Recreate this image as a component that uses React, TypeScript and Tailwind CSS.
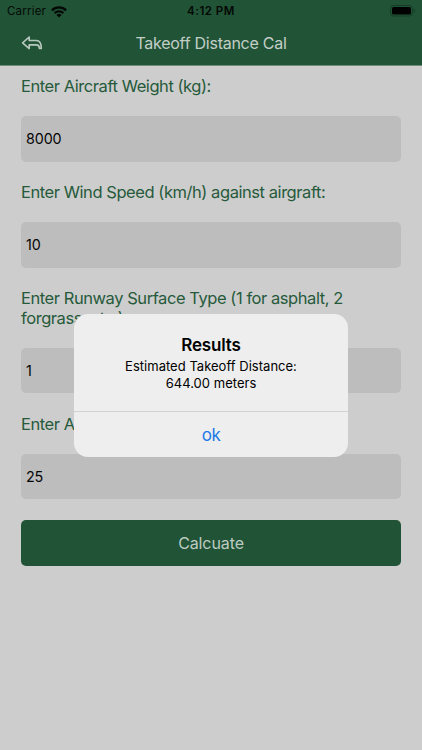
import React from 'react';

type FieldProps = { label: React.ReactNode; value: string };

function Field({ label, value }: FieldProps) {
  return (
    <div className="flex flex-col gap-[19.7px]">
      <label className="whitespace-nowrap text-[16.5px] leading-[19.6px] tracking-[-0.44px] text-[#265a3b]">{label}</label>
      <div className="flex h-[45.5px] items-center rounded-[5px] bg-[#bdbdbd] px-[5px] text-[14.3px] tracking-[-0.1px] text-[#050505]">
        {value}
      </div>
    </div>
  );
}

function StatusBar() {
  return (
    <div className="grid h-[22px] grid-cols-3 items-center px-[7px] text-[11.5px] text-[#030805]">
      <div className="flex items-center gap-[5px] pt-px">
        <span className="tracking-[0.2px]">Carrier</span>
        <svg width="16" height="12" viewBox="0 0 16 12" fill="none" stroke="currentColor" strokeWidth="2.3">
          <path d="M.9 4.3a10.2 10.2 0 0 1 14.2 0" />
          <path d="M3.6 7.2a6.4 6.4 0 0 1 8.8 0" />
          <path d="M8 11.6 5.4 9a3.8 3.8 0 0 1 5.2 0z" fill="currentColor" stroke="none" />
        </svg>
      </div>
      <span className="whitespace-nowrap pt-px text-center font-semibold tracking-[0.5px]">4:12 PM</span>
      <svg className="justify-self-end" width="25" height="12" viewBox="0 0 25 12">
        <rect x="0.5" y="0.5" width="22" height="10.5" rx="3" fill="none" stroke="#143d25" />
        <rect x="2" y="2" width="19" height="7.5" rx="1.5" fill="#000" />
        <path d="M23.8 4v3.6c1.4-.6 1.4-3 0-3.6z" fill="#123620" />
      </svg>
    </div>
  );
}

export default function App() {
  return (
    <div className="relative h-[750px] w-[422px] overflow-hidden bg-[#cdcdcd] font-['Inter','Liberation_Sans',sans-serif]">
      <header className="h-[66px] border-b border-[#6e8b79] bg-[#215437]">
        <StatusBar />
        <div className="grid h-[42px] grid-cols-[40px_1fr_40px] items-center px-[21px]">
          <svg width="22" height="16" viewBox="0 0 22 16" fill="none" stroke="#b9c8bf" strokeWidth="1.6" strokeLinejoin="round">
            <path d="M1.6 7.8 8.2 2v3.5h7.2c3.5 0 4.9 2 4.9 7.9h-1.9c0-2.7-1-3.5-3.4-3.5H8.2v3.7z" />
          </svg>
          <h1 className="whitespace-nowrap text-center text-[16px] tracking-[-0.26px] text-[#c3cec7]">Takeoff Distance Cal</h1>
        </div>
      </header>

      <main className="flex flex-col gap-[21.3px] px-[21px] pt-[10.8px]">
        <Field label="Enter Aircraft Weight (kg):" value="8000" />
        <Field label="Enter Wind Speed (km/h) against airgraft:" value="10" />
        <Field label={<>Enter Runway Surface Type (1 for asphalt, 2<br />forgrass, etc.):</>} value="1" />
        <Field label="Enter Air Temp:" value="25" />
        <button className="-mt-[0.6px] h-[45.7px] rounded-[5px] bg-[#215437] text-[16px] tracking-[-0.1px] text-[#bccac1]">Calcuate</button>
      </main>

      <div className="absolute inset-0 flex items-center justify-center pt-[21px]">
        <section className="flex h-[143px] w-[274px] flex-col rounded-[14px] bg-[#eeeeee] text-center text-black">
          <div className="h-[98px] border-b border-[#d2d2d2] pt-[20px]">
            <h2 className="text-[17px] font-semibold leading-[22px] tracking-[-0.15px]">Results</h2>
            <p className="mt-[2px] text-[13px] leading-[16.5px] tracking-[0.02px]">Estimated Takeoff Distance:<br />644.00 meters</p>
          </div>
          <button className="flex-1 pt-[2px] text-[17px] tracking-[-0.4px] text-[#2079e8]">ok</button>
        </section>
      </div>
    </div>
  );
}
